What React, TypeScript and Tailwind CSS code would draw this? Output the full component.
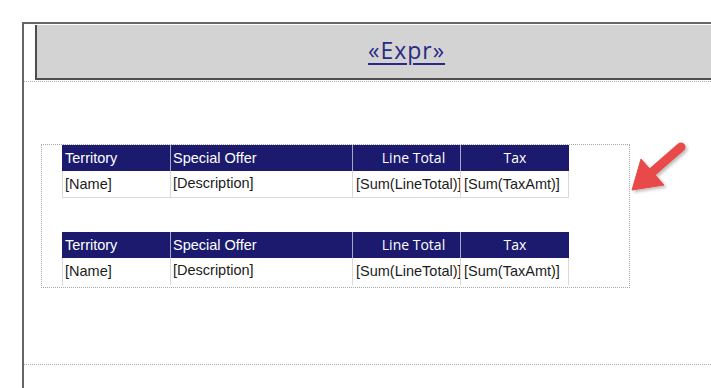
const headers = [
  { label: "Territory", w: "w-[108px]", cls: "pl-[2px] text-left", font: "font-['Liberation_Sans',Arial,sans-serif] text-[14.5px]" },
  { label: "Special Offer", w: "w-[182px]", cls: "pl-[2px] text-left", font: "font-['Liberation_Sans',Arial,sans-serif] text-[14.5px]" },
  { label: "Line Total", w: "w-[108px]", cls: "pl-[14px] text-center", font: "font-['Open_Sans',sans-serif] text-[14px]" },
  { label: "Tax", w: "w-[108px]", cls: "text-center", font: "font-['Open_Sans',sans-serif] text-[14px]" },
];

const cells = [
  { text: "[Name]", w: "w-[108px]", cls: "pl-[2px]" },
  { text: "[Description]", w: "w-[182px]", cls: "pl-[2px] -translate-y-[1px]" },
  { text: "[Sum(LineTotal)]", w: "w-[108px]", cls: "pl-[3px]" },
  { text: "[Sum(TaxAmt)]", w: "w-[108px]", cls: "pl-[3px]" },
];

const GroupTable = ({ last }: { last?: boolean }) => {
  return (
    <div className="w-[507px] shrink-0">
      <div className="flex h-[26px] bg-[#1b1a6e] border-l border-[#1b1a6e]">
        {headers.map((h, i) => (
          <div
            key={h.label}
            className={`${h.w} ${h.cls} ${h.font} ${i < 3 ? "border-r border-[#a7a7c4]" : ""} flex items-center leading-none text-white shrink-0`}
          >
            <span className={h.cls.includes("center") ? "w-full" : ""}>{h.label}</span>
          </div>
        ))}
      </div>
      <div className={`flex ${last ? "h-[28px] pb-px" : "h-[27px] border-b"} border-l border-[#d9d9d9]`}>
        {cells.map((c) => (
          <div
            key={c.text}
            className={`${c.w} border-r border-[#d9d9d9] flex items-center overflow-hidden whitespace-nowrap shrink-0`}
          >
            <span className={`${c.cls} font-['Liberation_Sans',Arial,sans-serif] text-[14.5px] leading-none text-[#1c1c1c]`}>
              {c.text}
            </span>
          </div>
        ))}
      </div>
    </div>
  );
};

export default function App() {
  return (
    <div className="relative w-[711px] h-[388px] overflow-hidden bg-white pt-[22px] pl-[22px]">
      <div className="h-full border-l-2 border-t-2 border-[#666] flex flex-col">
        {/* page header */}
        <div className="ml-[11px] mt-px h-[55px] shrink-0 bg-[#d3d3d3] border-l-2 border-b-2 border-[#4d4d4d] flex items-center pl-[331px]">
          <span className="font-['Open_Sans',sans-serif] text-[23px] tracking-[1px] leading-none text-[#2a2a86] underline underline-offset-[4px] decoration-[1.5px] -translate-y-[1px]">
            «Expr»
          </span>
        </div>
        <div className="mt-px border-t border-dotted border-[#b0b0b0]" />

        {/* body */}
        <div className="ml-[17px] mt-[62px] w-[589px] h-[144px] shrink-0 border border-dotted border-[#a8a8a8] pl-5 flex flex-col gap-[34px] overflow-hidden">
          <GroupTable />
          <GroupTable last />
        </div>

        <div className="mt-[76px] border-t border-dotted border-[#b0b0b0]" />
      </div>

      <svg className="absolute left-0 top-0 pointer-events-none" width="711" height="388" viewBox="0 0 711 388">
        <defs>
          <filter id="shadow" x="-20%" y="-20%" width="150%" height="150%">
            <feDropShadow dx="2" dy="2" stdDeviation="1.5" floodColor="#000" floodOpacity="0.25" />
          </filter>
        </defs>
        <g filter="url(#shadow)" fill="#e84a4a" stroke="#e84a4a">
          <line x1="681" y1="147" x2="650" y2="174" strokeWidth="9" strokeLinecap="round" />
          <polygon points="632,190 641,159 664,185" strokeWidth="1" strokeLinejoin="round" />
        </g>
      </svg>
    </div>
  );
}
